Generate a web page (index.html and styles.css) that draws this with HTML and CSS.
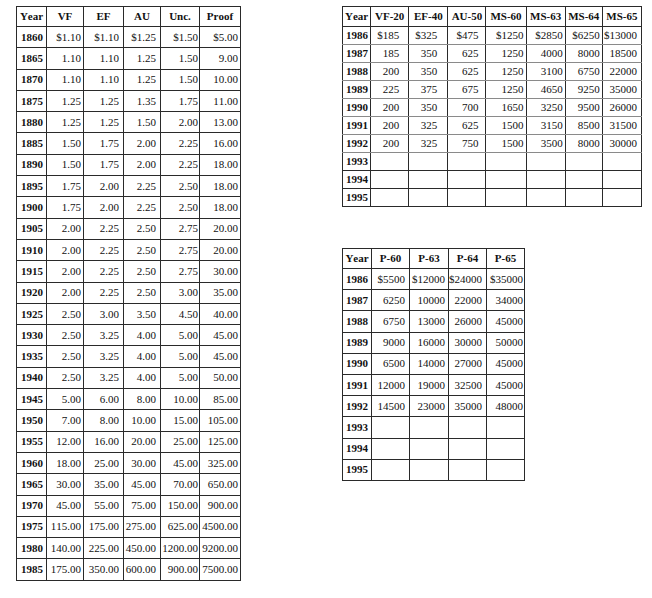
FILE: index.html
```html
<!DOCTYPE html>
<html>
<head>
<meta charset="utf-8">
<link rel="stylesheet" href="styles.css">
</head>
<body>
<div class="page">
  <table class="t t-left">
    <colgroup><col class="c30"><col class="c37"><col class="c40"><col class="c37"><col class="c39"><col class="c41"></colgroup>
    <thead><tr><th>Year</th><th>VF</th><th>EF</th><th>AU</th><th>Unc.</th><th>Proof</th></tr></thead>
    <tbody>
      <tr><th>1860</th><td>$1.10</td><td>$1.10</td><td>$1.25</td><td>$1.50</td><td>$5.00</td></tr>
      <tr><th>1865</th><td>1.10</td><td>1.10</td><td>1.25</td><td>1.50</td><td>9.00</td></tr>
      <tr><th>1870</th><td>1.10</td><td>1.10</td><td>1.25</td><td>1.50</td><td>10.00</td></tr>
      <tr><th>1875</th><td>1.25</td><td>1.25</td><td>1.35</td><td>1.75</td><td>11.00</td></tr>
      <tr><th>1880</th><td>1.25</td><td>1.25</td><td>1.50</td><td>2.00</td><td>13.00</td></tr>
      <tr><th>1885</th><td>1.50</td><td>1.75</td><td>2.00</td><td>2.25</td><td>16.00</td></tr>
      <tr><th>1890</th><td>1.50</td><td>1.75</td><td>2.00</td><td>2.25</td><td>18.00</td></tr>
      <tr><th>1895</th><td>1.75</td><td>2.00</td><td>2.25</td><td>2.50</td><td>18.00</td></tr>
      <tr><th>1900</th><td>1.75</td><td>2.00</td><td>2.25</td><td>2.50</td><td>18.00</td></tr>
      <tr><th>1905</th><td>2.00</td><td>2.25</td><td>2.50</td><td>2.75</td><td>20.00</td></tr>
      <tr><th>1910</th><td>2.00</td><td>2.25</td><td>2.50</td><td>2.75</td><td>20.00</td></tr>
      <tr><th>1915</th><td>2.00</td><td>2.25</td><td>2.50</td><td>2.75</td><td>30.00</td></tr>
      <tr><th>1920</th><td>2.00</td><td>2.25</td><td>2.50</td><td>3.00</td><td>35.00</td></tr>
      <tr><th>1925</th><td>2.50</td><td>3.00</td><td>3.50</td><td>4.50</td><td>40.00</td></tr>
      <tr><th>1930</th><td>2.50</td><td>3.25</td><td>4.00</td><td>5.00</td><td>45.00</td></tr>
      <tr><th>1935</th><td>2.50</td><td>3.25</td><td>4.00</td><td>5.00</td><td>45.00</td></tr>
      <tr><th>1940</th><td>2.50</td><td>3.25</td><td>4.00</td><td>5.00</td><td>50.00</td></tr>
      <tr><th>1945</th><td>5.00</td><td>6.00</td><td>8.00</td><td>10.00</td><td>85.00</td></tr>
      <tr><th>1950</th><td>7.00</td><td>8.00</td><td>10.00</td><td>15.00</td><td>105.00</td></tr>
      <tr><th>1955</th><td>12.00</td><td>16.00</td><td>20.00</td><td>25.00</td><td>125.00</td></tr>
      <tr><th>1960</th><td>18.00</td><td>25.00</td><td>30.00</td><td>45.00</td><td>325.00</td></tr>
      <tr><th>1965</th><td>30.00</td><td>35.00</td><td>45.00</td><td>70.00</td><td>650.00</td></tr>
      <tr><th>1970</th><td>45.00</td><td>55.00</td><td>75.00</td><td>150.00</td><td>900.00</td></tr>
      <tr><th>1975</th><td>115.00</td><td>175.00</td><td>275.00</td><td>625.00</td><td>4500.00</td></tr>
      <tr><th>1980</th><td>140.00</td><td>225.00</td><td>450.00</td><td>1200.00</td><td>9200.00</td></tr>
      <tr><th>1985</th><td>175.00</td><td>350.00</td><td>600.00</td><td>900.00</td><td>7500.00</td></tr>
    </tbody>
  </table>

  <div class="right">
    <table class="t t-ms">
      <colgroup><col class="c28"><col class="c38"><col class="c39"><col class="c38"><col class="c40"><col class="c39"><col class="c37"><col class="c39"></colgroup>
      <thead><tr><th>Year</th><th>VF-20</th><th>EF-40</th><th>AU-50</th><th>MS-60</th><th>MS-63</th><th>MS-64</th><th>MS-65</th></tr></thead>
      <tbody>
        <tr><th>1986</th><td>$185</td><td>$325</td><td>$475</td><td>$1250</td><td>$2850</td><td>$6250</td><td>$13000</td></tr>
        <tr><th>1987</th><td>185</td><td>350</td><td>625</td><td>1250</td><td>4000</td><td>8000</td><td>18500</td></tr>
        <tr><th>1988</th><td>200</td><td>350</td><td>625</td><td>1250</td><td>3100</td><td>6750</td><td>22000</td></tr>
        <tr><th>1989</th><td>225</td><td>375</td><td>675</td><td>1250</td><td>4650</td><td>9250</td><td>35000</td></tr>
        <tr><th>1990</th><td>200</td><td>350</td><td>700</td><td>1650</td><td>3250</td><td>9500</td><td>26000</td></tr>
        <tr><th>1991</th><td>200</td><td>325</td><td>625</td><td>1500</td><td>3150</td><td>8500</td><td>31500</td></tr>
        <tr><th>1992</th><td>200</td><td>325</td><td>750</td><td>1500</td><td>3500</td><td>8000</td><td>30000</td></tr>
        <tr class="blank"><th>1993</th><td></td><td></td><td></td><td></td><td></td><td></td><td></td></tr>
        <tr class="blank"><th>1994</th><td></td><td></td><td></td><td></td><td></td><td></td><td></td></tr>
        <tr class="blank"><th>1995</th><td></td><td></td><td></td><td></td><td></td><td></td><td></td></tr>
      </tbody>
    </table>

    <table class="t t-proof">
      <colgroup><col class="c29"><col class="c38"><col class="c39"><col class="c38"><col class="c38"></colgroup>
      <thead><tr><th>Year</th><th>P-60</th><th>P-63</th><th>P-64</th><th>P-65</th></tr></thead>
      <tbody>
        <tr><th>1986</th><td>$5500</td><td>$12000</td><td>$24000</td><td>$35000</td></tr>
        <tr><th>1987</th><td>6250</td><td>10000</td><td>22000</td><td>34000</td></tr>
        <tr><th>1988</th><td>6750</td><td>13000</td><td>26000</td><td>45000</td></tr>
        <tr><th>1989</th><td>9000</td><td>16000</td><td>30000</td><td>50000</td></tr>
        <tr><th>1990</th><td>6500</td><td>14000</td><td>27000</td><td>45000</td></tr>
        <tr><th>1991</th><td>12000</td><td>19000</td><td>32500</td><td>45000</td></tr>
        <tr><th>1992</th><td>14500</td><td>23000</td><td>35000</td><td>48000</td></tr>
        <tr><th>1993</th><td></td><td></td><td></td><td></td></tr>
        <tr><th>1994</th><td></td><td></td><td></td><td></td></tr>
        <tr><th>1995</th><td></td><td></td><td></td><td></td></tr>
      </tbody>
    </table>
  </div>
</div>
</body>
</html>
```
FILE: styles.css
```css
html, body {
  margin: 0;
  padding: 0;
  background: #ffffff;
}
body {
  font-family: "Liberation Serif", "Times New Roman", serif;
  font-size: 11px;
  color: #111111;
  font-kerning: none;
}
.page {
  display: flex;
  align-items: flex-start;
  padding: 6px 0 0 16px;
  gap: 101px;
}
.right {
  display: flex;
  flex-direction: column;
  gap: 41px;
}
.t {
  border-collapse: collapse;
  table-layout: fixed;
}
.t th, .t td {
  border: 1px solid #2a2a2a;
  padding: 0;
  white-space: nowrap;
  overflow: hidden;
  line-height: 1;
}
.t thead th {
  text-align: center;
  font-weight: bold;
}
.t tbody th {
  text-align: left;
  font-weight: bold;
  padding-left: 4px;
}
.t td {
  text-align: right;
}

.c28 { width: 28px; }
.c29 { width: 29px; }
.c30 { width: 30px; }
.c37 { width: 37px; }
.c38 { width: 38px; }
.c39 { width: 39px; }
.c40 { width: 40px; }
.c41 { width: 41px; }

/* left table */
.t-left { width: 224px; border: 1px solid #555; }
.t-left thead tr { height: 20px; }
.t-left tbody tr { height: 21.3px; }
.t-left td:nth-child(2) { padding-right: 2px; }
.t-left td:nth-child(3) { padding-right: 4px; }
.t-left td:nth-child(4) { padding-right: 4px; }
.t-left td:nth-child(5) { padding-right: 1px; }
.t-left td:nth-child(6) { padding-right: 2px; }

/* MS table */
.t-ms { width: 300px; }
.t-ms thead tr { height: 20px; }
.t-ms tbody tr { height: 18px; }
.t-ms tbody tr th { padding-left: 3px; }
.t-ms tbody td, .t-ms tbody th { border-top-color: #8a8a8a; border-bottom-color: #8a8a8a; }
.t-ms tbody tr.blank td, .t-ms tbody tr.blank th { border-top-color: #2a2a2a; border-bottom-color: #2a2a2a; }
.t-ms td:nth-child(2) { padding-right: 9px; }
.t-ms td:nth-child(3) { padding-right: 10px; }
.t-ms td:nth-child(4) { padding-right: 7px; }
.t-ms td:nth-child(5) { padding-right: 2px; }
.t-ms td:nth-child(6) { padding-right: 2px; }
.t-ms td:nth-child(7) { padding-right: 2px; }
.t-ms td:nth-child(8) { padding-right: 4px; }

/* proof table */
.t-proof { width: 182px; }
.t-proof thead tr { height: 20px; }
.t-proof tbody tr { height: 21.2px; }
.t-proof tbody tr th { padding-left: 3px; }
.t-proof td:nth-child(2) { padding-right: 4px; }
.t-proof td:nth-child(3) { padding-right: 3px; }
.t-proof td:nth-child(4) { padding-right: 4px; }
.t-proof td:nth-child(5) { padding-right: 1px; }
```
